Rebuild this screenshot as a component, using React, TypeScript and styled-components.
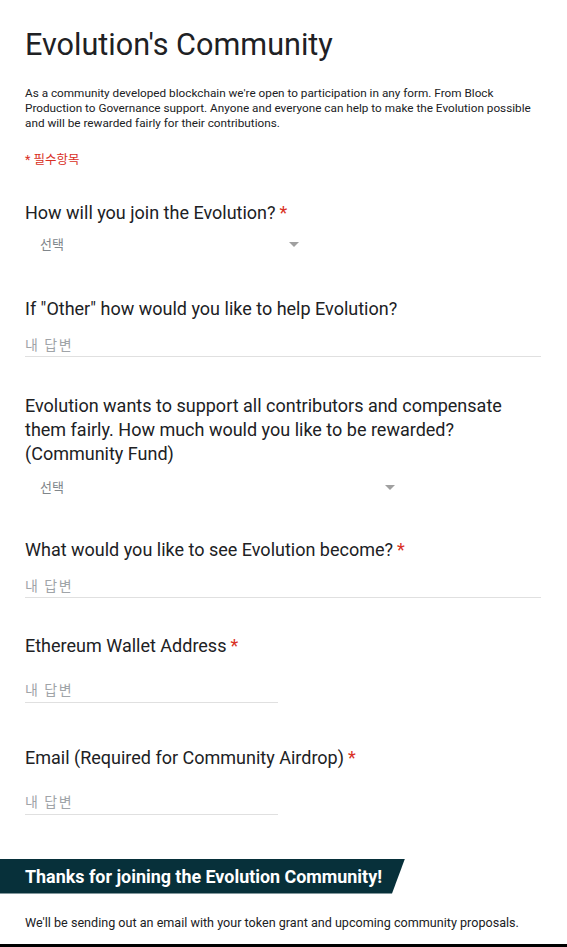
import React from "react";
import styled, { createGlobalStyle } from "styled-components";

const Global = createGlobalStyle`
  html, body { margin: 0; padding: 0; background: #fff; }
  body { font-family: Roboto, "Noto Sans CJK KR", Arial, sans-serif; color: #202124; }
`;

const Page = styled.div`
  width: 567px;
  height: 947px;
  box-sizing: border-box;
  border-bottom: 3px solid #000;
  display: flex;
  flex-direction: column;
  overflow: hidden;
`;

const Content = styled.div`
  padding: 0 26px 0 25px;
  display: flex;
  flex-direction: column;
`;

const Title = styled.h1`
  margin: 27px 0 0;
  font-size: 30.6px;
  line-height: 36px;
  font-weight: 400;
  color: #202124;
`;

const Description = styled.p`
  margin: 22.5px 0 0;
  font-size: 11.75px;
  line-height: 15px;
  color: #202124;
`;

const RequiredNote = styled.div`
  margin-top: 21px;
  font-size: 12.5px;
  line-height: 15px;
  color: #d93025;
`;

const Label = styled.div<{ $mt: number }>`
  margin-top: ${(p) => p.$mt}px;
  font-size: 18px;
  line-height: 24px;
  color: #202124;
`;

const Star = styled.span`
  color: #d93025;
  margin-left: 4px;
`;

const Select = styled.div<{ $mt: number; $w: number }>`
  margin-top: ${(p) => p.$mt}px;
  width: ${(p) => p.$w}px;
  display: flex;
  align-items: center;
  justify-content: space-between;
  padding-left: 15px;
  box-sizing: border-box;
  font-size: 13px;
  line-height: 20px;
  color: #80868b;
`;

const Arrow = styled.span`
  width: 0;
  height: 0;
  border-left: 5px solid transparent;
  border-right: 5px solid transparent;
  border-top: 5px solid #a0a0a0;
`;

const Input = styled.div<{ $mt: number; $short?: boolean }>`
  margin-top: ${(p) => p.$mt}px;
  width: ${(p) => (p.$short ? 253 : 516)}px;
  font-size: 14px;
  line-height: 20px;
  padding-bottom: 1.5px;
  border-bottom: 1px solid #e0e0e0;
  color: #a0a4a8;
  letter-spacing: 1.5px;
`;

const Banner = styled.div`
  margin-top: 44px;
  width: 405px;
  height: 35px;
  flex-shrink: 0;
  background: #07303a;
  clip-path: polygon(0 0, 100% 0, calc(100% - 13px) 100%, 0 100%);
  display: flex;
  align-items: center;
  padding-left: 25px;
  box-sizing: border-box;
  color: #fff;
  font-weight: 700;
  font-size: 17.9px;
`;

const Footer = styled.p`
  margin: 21px 0 0 25px;
  font-size: 12.6px;
  line-height: 15px;
  color: #202124;
`;

export default function App() {
  return (
    <Page>
      <Global />
      <Content>
        <Title>Evolution's Community</Title>
        <Description>
          As a community developed blockchain we're open to participation in any form. From Block
          Production to Governance support. Anyone and everyone can help to make the Evolution possible
          and will be rewarded fairly for their contributions.
        </Description>
        <RequiredNote>* 필수항목</RequiredNote>

        <Label $mt={34.5}>
          How will you join the Evolution?<Star>*</Star>
        </Label>
        <Select $mt={9.5} $w={274}>
          선택<Arrow />
        </Select>

        <Label $mt={42.5}>If "Other" how would you like to help Evolution?</Label>
        <Input $mt={13.5}>내 답변</Input>

        <Label $mt={37}>
          Evolution wants to support all contributors and compensate them fairly. How much would you like
          to be rewarded? (Community Fund)
        </Label>
        <Select $mt={11.5} $w={370}>
          선택<Arrow />
        </Select>

        <Label $mt={40.5}>
          What would you like to see Evolution become?<Star>*</Star>
        </Label>
        <Input $mt={13.5}>내 답변</Input>

        <Label $mt={36}>
          Ethereum Wallet Address<Star>*</Star>
        </Label>
        <Input $mt={22} $short>
          내 답변
        </Input>

        <Label $mt={43}>
          Email (Required for Community Airdrop)<Star>*</Star>
        </Label>
        <Input $mt={22.5} $short>
          내 답변
        </Input>
      </Content>
      <Banner>Thanks for joining the Evolution Community!</Banner>
      <Footer>We'll be sending out an email with your token grant and upcoming community proposals.</Footer>
    </Page>
  );
}
